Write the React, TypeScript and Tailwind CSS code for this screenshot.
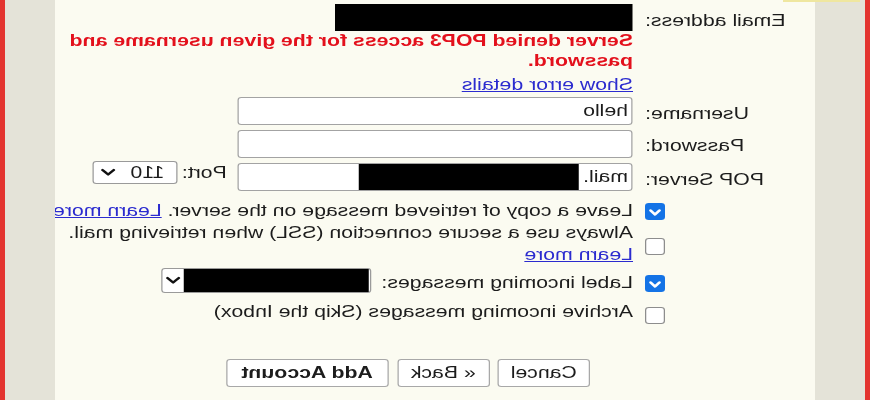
import React from "react";

function Check({ checked }: { checked: boolean }) {
  if (checked) {
    return (
      <div className="w-[16px] h-[17px] rounded-[3px] bg-[#1473e6] flex items-center justify-center">
        <svg width="12" height="12" viewBox="0 0 12 12">
          <polyline points="2.5,4.5 6,8.5 9.5,4.5" fill="none" stroke="#fff" strokeWidth="2.4" strokeLinecap="round" strokeLinejoin="round" />
        </svg>
      </div>
    );
  }
  return <div className="w-[16px] h-[17px] rounded-[3px] border border-[#8d8d8d] bg-white" />;
}

function Chevron() {
  return (
    <svg width="13" height="9" viewBox="0 0 13 9">
      <polyline points="2,2 6.5,6.5 11,2" fill="none" stroke="#111" strokeWidth="2.2" strokeLinecap="round" strokeLinejoin="round" />
    </svg>
  );
}

export default function App() {
  return (
    <div className="w-[870px] h-[400px] overflow-hidden bg-[#fbfbf1]">
      <div className="relative mx-auto flex h-[400px] w-[696px] [transform:scale(-1.25,1)] font-['Liberation_Sans',Arial,sans-serif] text-[17px] text-[#1c1c1c]">
        <div className="w-[4px] shrink-0 bg-[#e3342f]" />
        <div className="w-[40px] shrink-0 bg-[#e4e3d8]" />
        <div className="flex min-w-0 flex-1 flex-col bg-[#fbfbf1]">
          {/* Email */}
          <div className="mt-[4px] flex h-[27px] items-start">
            <div className="w-[136px] shrink-0 text-right leading-[27px] mt-[3px]">Email address:</div>
            <div className="ml-[9.6px] h-[27px] w-[238px] bg-black" />
          </div>
          {/* Error */}
          <div className="flex">
            <div className="w-[136px] shrink-0" />
            <div className="ml-[9.6px] w-[480px] shrink-0 font-bold leading-[20px] text-[#e3101c]">
              Server denied POP3 access for the given username and password.
            </div>
          </div>
          <div className="mt-[4px] flex">
            <div className="w-[136px] shrink-0" />
            <div className="ml-[9.6px] leading-[20px] text-[#2b2bcf] underline">Show error details</div>
          </div>
          {/* Username */}
          <div className="mt-[2px] flex h-[28px] items-start">
            <div className="mt-[3px] w-[136px] shrink-0 text-right leading-[28px]">Username:</div>
            <div className="ml-[9.6px] flex h-[28px] w-[316px] items-center rounded-[3px] border border-[#a3a3a3] bg-white px-[3px]">hello</div>
          </div>
          {/* Password */}
          <div className="mt-[5px] flex h-[28px] items-start">
            <div className="mt-[2px] w-[136px] shrink-0 text-right leading-[28px]">Password:</div>
            <div className="ml-[9.6px] h-[28px] w-[316px] rounded-[3px] border border-[#a3a3a3] bg-white" />
          </div>
          {/* POP server */}
          <div className="mt-[5px] flex h-[28px] items-start">
            <div className="mt-[3px] w-[136px] shrink-0 text-right leading-[28px]">POP Server:</div>
            <div className="ml-[9.6px] flex h-[28px] w-[316px] shrink-0 items-center overflow-hidden rounded-[3px] border border-[#a3a3a3] bg-white pl-[3px]">
              <span>mail.</span>
              <div className="ml-[3px] h-[28px] w-[176px] bg-black" />
            </div>
            <div className="ml-[9px] mt-[-4px] shrink-0 leading-[28px]">Port:</div>
            <div className="ml-[3px] mt-[-2px] flex h-[23px] w-[68px] shrink-0 items-center justify-between rounded-[3px] border border-[#9a9a9a] bg-white pl-[10px] pr-[5px]">
              <span className="leading-[21px]">110</span>
              <Chevron />
            </div>
          </div>
          {/* Checkbox 1 */}
          <div className="mt-[9px] flex">
            <div className="flex w-[136px] shrink-0 justify-end pt-[3px]">
              <Check checked />
            </div>
            <div className="ml-[9.6px] w-[480px] shrink-0 leading-[22px]">
              Leave a copy of retrieved message on the server.{" "}
              <span className="text-[#2b2bcf] underline">Learn more</span>
            </div>
          </div>
          {/* Checkbox 2 */}
          <div className="flex">
            <div className="flex w-[136px] shrink-0 justify-end pt-[16px]">
              <Check checked={false} />
            </div>
            <div className="ml-[9.6px] w-[480px] shrink-0 leading-[22px]">
              Always use a secure connection (SSL) when retrieving mail.{" "}
              <span className="text-[#2b2bcf] underline">Learn more</span>
            </div>
          </div>
          {/* Checkbox 3 */}
          <div className="mt-[2px] flex h-[25px] items-start">
            <div className="flex w-[136px] shrink-0 justify-end pt-[7px]">
              <Check checked />
            </div>
            <div className="ml-[9.6px] mt-[2px] shrink-0 leading-[25px]">Label incoming messages:</div>
            <div className="ml-[8px] flex h-[25px] w-[168px] shrink-0 items-center rounded-[3px] border border-[#9a9a9a] bg-white pl-[1px] pr-[2px]">
              <div className="h-[23px] w-[148px] bg-black" />
              <div className="ml-[2px]">
                <Chevron />
              </div>
            </div>
          </div>
          {/* Checkbox 4 */}
          <div className="mt-[8px] flex">
            <div className="flex w-[136px] shrink-0 justify-end pt-[6px]">
              <Check checked={false} />
            </div>
            <div className="ml-[9.6px] shrink-0 leading-[22px]">Archive incoming messages (Skip the Inbox)</div>
          </div>
          {/* Buttons */}
          <div className="mt-[35px] flex">
            <div className="w-[136px] shrink-0" />
            <div className="ml-[44px] flex h-[28px] shrink-0">
              <div className="flex w-[74px] items-center justify-center rounded-[3px] border border-[#a8a8a8] bg-white">Cancel</div>
              <div className="ml-[6.4px] flex w-[74px] items-center justify-center rounded-[3px] border border-[#a8a8a8] bg-white">« Back</div>
              <div className="ml-[7px] flex w-[130px] items-center justify-center rounded-[3px] border border-[#a8a8a8] bg-white font-bold">Add Account</div>
            </div>
          </div>
        </div>
        <div className="w-[40px] shrink-0 bg-[#e4e3d8]" />
        <div className="w-[4px] shrink-0 bg-[#e3342f]" />
        <div className="absolute left-[8px] top-0 h-[2px] w-[62px] bg-[#efe7a0]" />
      </div>
    </div>
  );
}
